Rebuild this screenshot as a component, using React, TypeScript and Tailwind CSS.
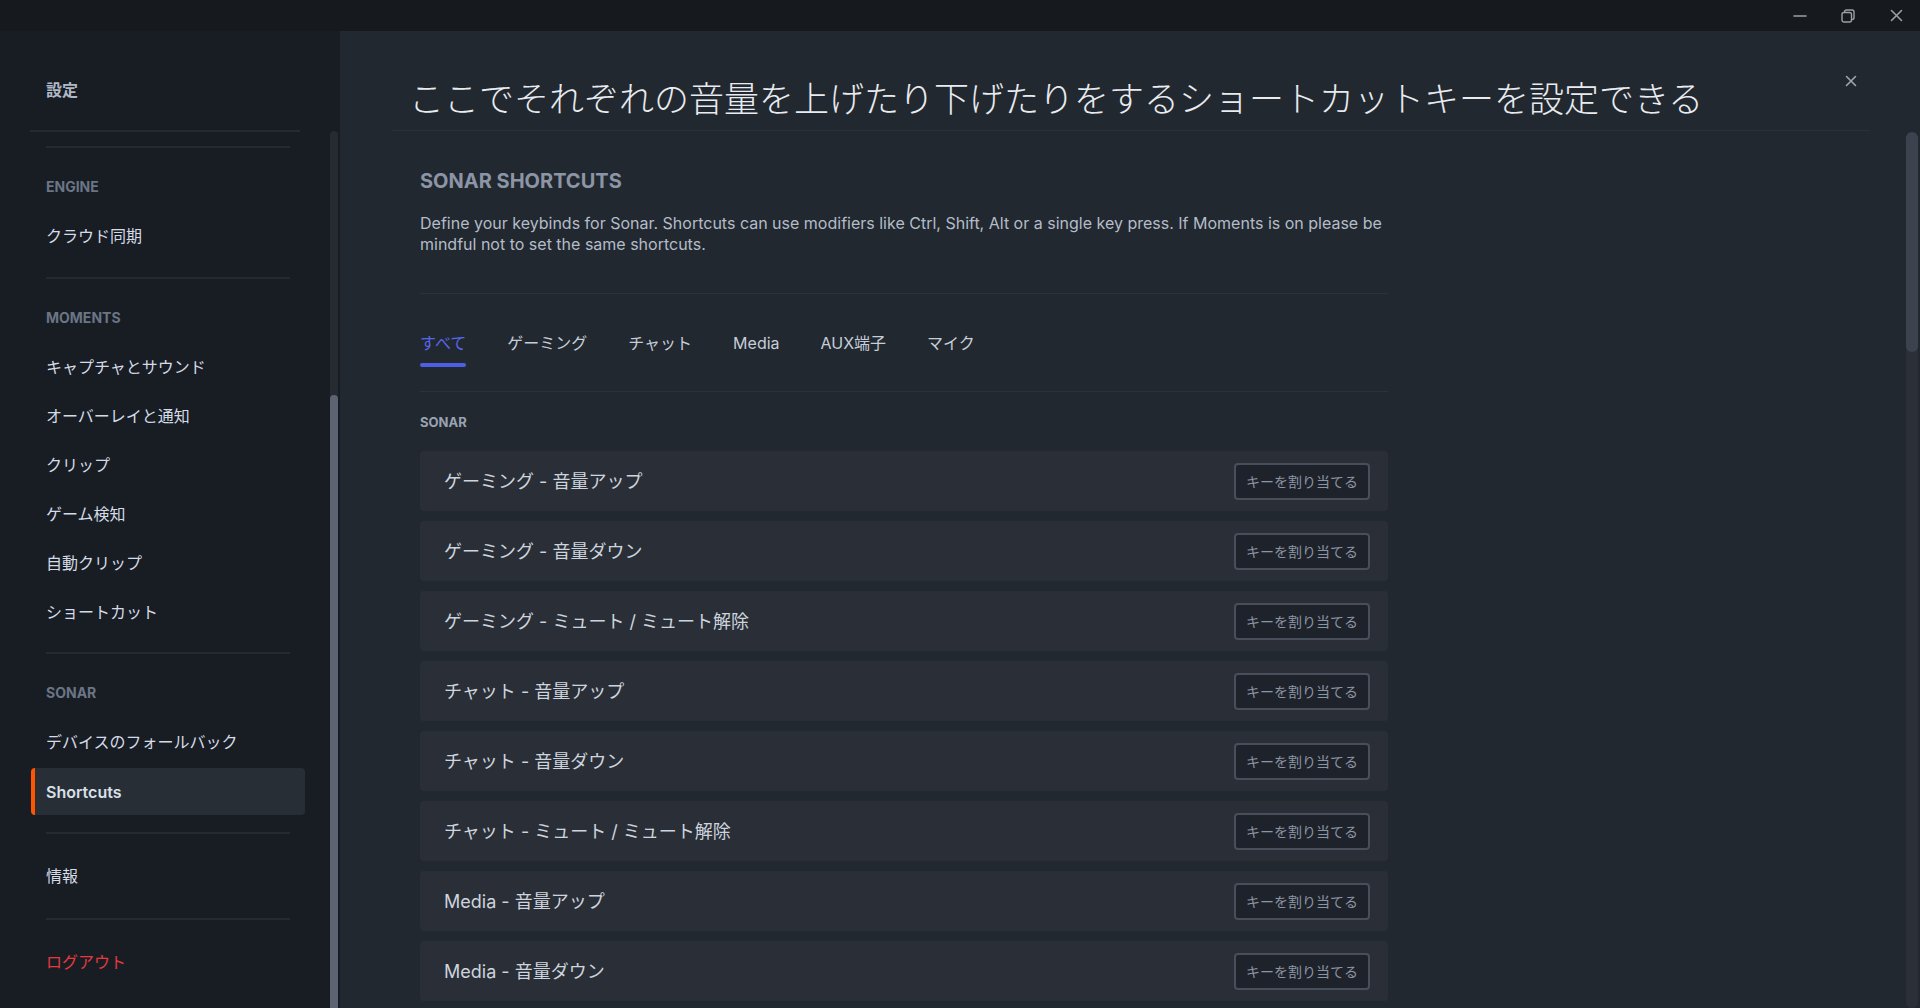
import React from 'react';

const rows = [
  'ゲーミング - 音量アップ',
  'ゲーミング - 音量ダウン',
  'ゲーミング - ミュート / ミュート解除',
  'チャット - 音量アップ',
  'チャット - 音量ダウン',
  'チャット - ミュート / ミュート解除',
  'Media - 音量アップ',
  'Media - 音量ダウン',
];

const tabs = ['すべて', 'ゲーミング', 'チャット', 'Media', 'AUX端子', 'マイク'];

function Divider() {
  return <div className="ml-[46px] w-[244px] h-[2px] bg-[#242a31]" />;
}

function SectionLabel({ text }: { text: string }) {
  return (
    <div className="mt-[15px] h-[48px] flex items-center pl-[46px] text-[14px] font-bold text-[#6b7586] leading-[16px]">
      {text}
    </div>
  );
}

function NavItem({ text }: { text: string }) {
  return (
    <div className="h-[49px] flex items-center pl-[46px] text-[16px] text-[#d4dbe6]">{text}</div>
  );
}

function Sidebar() {
  return (
    <aside className="w-[340px] shrink-0 bg-[#181d24] flex">
      <div className="w-[330px] flex flex-col">
        <div className="h-[99px] pt-[49px] pl-[46px] text-[16px] leading-[20px] font-bold text-[#aeb8c6]">設定</div>
        <div className="mx-[30px] h-[2px] bg-[#242a31]" />
        <div className="mt-[14px]">
          <Divider />
        </div>

        <SectionLabel text="ENGINE" />
        <NavItem text="クラウド同期" />
        <div className="mt-[17px]">
          <Divider />
        </div>

        <SectionLabel text="MOMENTS" />
        <NavItem text="キャプチャとサウンド" />
        <NavItem text="オーバーレイと通知" />
        <NavItem text="クリップ" />
        <NavItem text="ゲーム検知" />
        <NavItem text="自動クリップ" />
        <NavItem text="ショートカット" />
        <div className="mt-[16px]">
          <Divider />
        </div>

        <SectionLabel text="SONAR" />
        <NavItem text="デバイスのフォールバック" />
        <div className="h-[51px] pt-[2px]">
          <div className="ml-[31px] w-[274px] h-[47px] rounded-[4px] bg-[#282e36] border-l-[4px] border-[#ff5500] flex items-center pl-[11px] text-[16px] font-semibold text-[#d9e0ea]">
            Shortcuts
          </div>
        </div>
        <div className="mt-[15px]">
          <Divider />
        </div>

        <div className="h-[84px] flex items-center pl-[46px] text-[16px] text-[#d4dbe6]">情報</div>
        <Divider />
        <div className="h-[84px] flex items-center pl-[46px] text-[16px] text-[#e5393f]">ログアウト</div>
      </div>
      <div className="w-[8px] mt-[100px] rounded-t-full bg-[#262b32] flex flex-col">
        <div className="mt-[264px] flex-1 rounded-t-full bg-[#5d6373]" />
      </div>
    </aside>
  );
}

function ShortcutRow({ label }: { label: string }) {
  return (
    <div className="h-[60px] shrink-0 rounded-[4px] bg-[#2a2f37] flex items-center justify-between pl-[24px] pr-[18px]">
      <span className="text-[18px] text-[#cdd4de]">{label}</span>
      <button className="h-[37px] w-[136px] rounded-[4px] border-2 border-[#484e5a] bg-[#1e222a] text-[14px] text-[#8c95a3] flex items-center justify-center">
        キーを割り当てる
      </button>
    </div>
  );
}

export default function App() {
  return (
    <div className="w-[1920px] h-[1008px] flex flex-col overflow-hidden font-[Inter,'Noto_Sans_CJK_JP',sans-serif] bg-[#22282f]">
      {/* Title bar */}
      <div className="h-[31px] shrink-0 bg-[#16191d] flex justify-end">
        <button className="w-[48px] h-[31px] flex items-center justify-center text-[#9aa0a8]">
          <svg width="14" height="14" viewBox="0 0 14 14">
            <path d="M1 7h12" stroke="currentColor" strokeWidth="1.6" strokeLinecap="round" />
          </svg>
        </button>
        <button className="w-[48px] h-[31px] flex items-center justify-center text-[#9aa0a8]">
          <svg width="14" height="14" viewBox="0 0 14 14" fill="none">
            <rect x="1" y="3.5" width="9.5" height="9.5" rx="2" stroke="currentColor" strokeWidth="1.4" />
            <path d="M3.5 3.5V3a2 2 0 0 1 2-2H11a2 2 0 0 1 2 2v5.5a2 2 0 0 1-2 2h-0.5" stroke="currentColor" strokeWidth="1.4" />
          </svg>
        </button>
        <button className="w-[48px] h-[31px] flex items-center justify-center text-[#9aa0a8]">
          <svg width="13" height="13" viewBox="0 0 13 13">
            <path d="M1.5 1.5l10 10M11.5 1.5l-10 10" stroke="currentColor" strokeWidth="1.6" strokeLinecap="round" />
          </svg>
        </button>
      </div>

      <div className="flex flex-1 min-h-0">
        <Sidebar />

        <main className="flex-1 flex min-w-0 bg-[#22282f]">
          <div className="flex-1 flex flex-col min-w-0">
            {/* Header */}
            <div className="h-[100px] shrink-0 ml-[51px] mr-[36px] border-b border-[#2a3038] flex items-start">
              <h1 className="pt-[46px] pl-[18px] text-[35px] leading-[44px] font-light text-[#e8ebef] whitespace-nowrap">
                ここでそれぞれの音量を上げたり下げたりをするショートカットキーを設定できる
              </h1>
              <button className="ml-auto mt-[44px] mr-[13px] text-[#a0a6b0]">
                <svg width="12" height="12" viewBox="0 0 12 12">
                  <path d="M1.5 1.5l9 9M10.5 1.5l-9 9" stroke="currentColor" strokeWidth="1.6" strokeLinecap="round" />
                </svg>
              </button>
            </div>

            {/* Content */}
            <div className="ml-[80px] w-[968px] flex flex-col">
              <h2 className="mt-[38px] text-[20px] leading-[24px] font-bold text-[#8c95a5]">SONAR SHORTCUTS</h2>
              <p className="mt-[20px] text-[16px] leading-[21px] text-[#b4bcc8] whitespace-nowrap">
                Define your keybinds for Sonar. Shortcuts can use modifiers like Ctrl, Shift, Alt or a single key press. If Moments is on please be
                <br />
                mindful not to set the same shortcuts.
              </p>
              <div className="mt-[38px] h-px bg-[#2c323a]" />

              <div className="mt-[37px] flex gap-[41px]">
                {tabs.map((t, i) => (
                  <div key={t} className="flex flex-col">
                    <span className={`text-[16px] leading-[24px] ${i === 0 ? 'text-[#5567ee]' : 'text-[#c5cdd9]'}`}>{t}</span>
                    <div className={`mt-[8px] h-[4px] rounded-full ${i === 0 ? 'bg-[#4c5fe6]' : 'bg-transparent'}`} />
                  </div>
                ))}
              </div>
              <div className="mt-[24px] h-px bg-[#2c323a]" />

              <div className="mt-[22px] text-[13px] leading-[16px] font-bold text-[#9aa2b2]">SONAR</div>

              <div className="mt-[21px] flex flex-col gap-[10px]">
                {rows.map((r) => (
                  <ShortcutRow key={r} label={r} />
                ))}
              </div>
            </div>
          </div>

          {/* Scrollbar */}
          <div className="w-[12px] mr-[2px] mt-[101px] rounded-full bg-[#2b3038] flex flex-col">
            <div className="h-[220px] rounded-full bg-[#3d434e]" />
          </div>
        </main>
      </div>
    </div>
  );
}
